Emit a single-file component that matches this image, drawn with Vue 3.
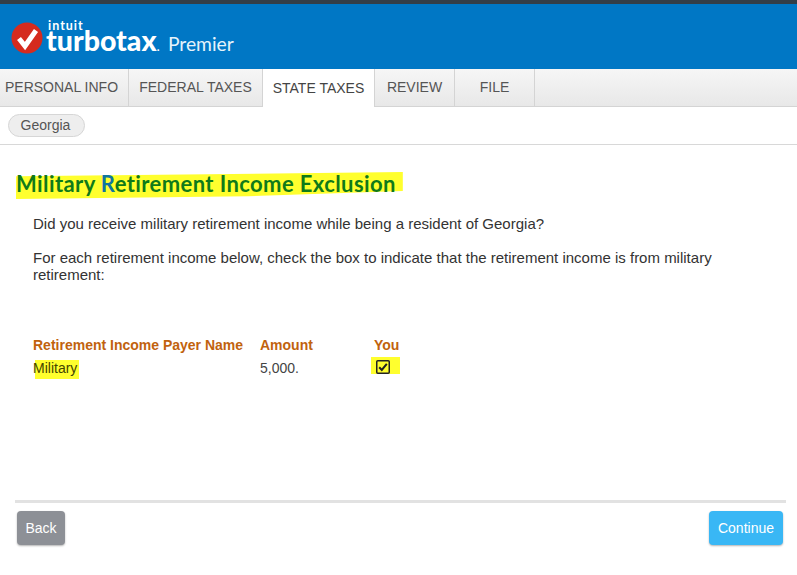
<template>
  <div class="page">
    <header class="brand">
      <svg class="logo" width="32" height="32" viewBox="0 0 32 32">
        <circle cx="16" cy="16" r="15.5" fill="#d52b1e" />
        <path d="M8 16.5l6 7.5L25 8.5" fill="none" stroke="#fff" stroke-width="5" />
      </svg>
      <div class="wordmark">
        <span class="intuit">intuit</span>
        <div class="product">
          <span class="turbotax">turbotax</span><span class="dot">.</span>
          <span class="premier">Premier</span>
        </div>
      </div>
    </header>

    <nav class="tabs">
      <div
        v-for="tab in tabs"
        :key="tab.label"
        class="tab"
        :class="[tab.cls, { active: tab.active }]"
      >
        {{ tab.label }}
      </div>
    </nav>

    <div class="subnav">
      <span class="pill">Georgia</span>
    </div>

    <main class="content">
      <h1 class="title"><span class="marker">Military <span class="blue">R</span>etirement Income Exclusion</span></h1>
      <div class="body">
        <p>Did you receive military retirement income while being a resident of Georgia?</p>
        <p>For each retirement income below, check the box to indicate that the retirement income is from military retirement:</p>

        <div class="table">
          <div class="th">Retirement Income Payer Name</div>
          <div class="th">Amount</div>
          <div class="th">You</div>
          <div><span class="hl-name">Military</span></div>
          <div class="amount">5,000.</div>
          <div class="check-cell">
            <span class="hl-check">
              <svg width="14" height="14" viewBox="0 0 14 14">
                <rect x="0.75" y="0.75" width="12.5" height="12.5" rx="1" fill="none" stroke="#222" stroke-width="1.5" />
                <path d="M3.2 7.2l2.6 2.8 5-6.2" fill="none" stroke="#222" stroke-width="2" />
              </svg>
            </span>
          </div>
        </div>
      </div>
    </main>

    <footer class="footer">
      <button class="btn back">Back</button>
      <button class="btn continue">Continue</button>
    </footer>
  </div>
</template>

<script setup>
const tabs = [
  { label: 'PERSONAL INFO', cls: 't1' },
  { label: 'FEDERAL TAXES', cls: 't2' },
  { label: 'STATE TAXES', cls: 't3', active: true },
  { label: 'REVIEW', cls: 't4' },
  { label: 'FILE', cls: 't5' }
]
</script>

<style>
html, body {
  margin: 0;
  background: #fff;
}
</style>

<style scoped>
.page {
  width: 797px;
  height: 575px;
  overflow: hidden;
  display: flex;
  flex-direction: column;
  font-family: "Liberation Sans", Arial, sans-serif;
  color: #333;
  background: #fff;
}

.brand {
  height: 69px;
  border-top: 4px solid #333e48;
  background: #0077c5;
  display: flex;
  align-items: flex-start;
  padding: 15px 0 0 11px;
  box-sizing: border-box;
  flex: none;
}

.logo {
  flex: none;
  margin-top: 3px;
}

.wordmark {
  margin-left: 3px;
  padding-top: 4px;
  color: #fff;
}

.intuit {
  display: block;
  margin-left: 2px;
  font-family: Lato, sans-serif;
  font-weight: 700;
  font-size: 12.5px;
  line-height: 6px;
  letter-spacing: 1px;
}

.product {
  display: flex;
  align-items: baseline;
  line-height: 20px;
  margin-top: 1px;
}

.turbotax {
  font-family: Lato, sans-serif;
  font-weight: 900;
  font-size: 28.5px;
}

.dot {
  font-family: Lato, sans-serif;
  font-size: 14px;
  margin-right: 8px;
}

.premier {
  font-family: Lato, sans-serif;
  font-size: 19.3px;
  color: #e6f3fb;
}

.tabs {
  height: 38px;
  flex: none;
  display: flex;
  background: linear-gradient(#f6f6f6, #e8e8e8);
  border-bottom: 1px solid #d4d4d4;
  box-sizing: border-box;
}

.tab {
  display: flex;
  align-items: center;
  justify-content: center;
  box-sizing: border-box;
  font-size: 14px;
  color: #555;
  border-right: 1px solid #d4d4d4;
  padding-bottom: 2px;
}

.t1 { width: 129px; padding-right: 5px; }
.t2 { width: 134px; }
.t3 { width: 112px; }
.t4 { width: 80px; }
.t5 { width: 80px; }

.tab.active {
  background: #fff;
  height: 38px;
  color: #444;
  padding-bottom: 0;
}

.subnav {
  height: 38px;
  flex: none;
  box-sizing: border-box;
  border-bottom: 1px solid #d8d8d8;
  padding: 7px 0 0 8px;
}

.pill {
  display: inline-block;
  box-sizing: border-box;
  width: 77px;
  height: 23px;
  padding-right: 2px;
  line-height: 21px;
  text-align: center;
  font-size: 14px;
  color: #555;
  background: #eee;
  border: 1px solid #d6d6d6;
  border-radius: 12px;
}

.content {
  flex: 1;
  padding: 0 11px 0 16px;
}

.title {
  margin: 27px 0 0;
  font-family: Lato, sans-serif;
  font-size: 22px;
  font-weight: 700;
  letter-spacing: 0.4px;
  line-height: 24px;
  color: #0f7a1a;
}

.marker {
  position: relative;
  z-index: 0;
  display: inline-block;
}

.marker::before {
  content: "";
  position: absolute;
  z-index: -1;
  left: 0;
  right: -7px;
  top: 0;
  bottom: -3px;
  background: #ffff2e;
  clip-path: polygon(0 16%, 100% 0, 100% 70%, 60% 90%, 0 100%);
}

.blue {
  color: #0f76a0;
}

.body {
  padding-left: 17px;
  padding-right: 60px;
  font-size: 15px;
  line-height: 17px;
}

.body p {
  margin: 0;
}

.body p:first-child {
  margin-top: 19px;
}

.body p + p {
  margin-top: 17px;
}

.table {
  margin-top: 54px;
  display: grid;
  grid-template-columns: 227px 114px auto;
  justify-content: start;
  row-gap: 6px;
  font-size: 14px;
  line-height: 17px;
}

.th {
  font-weight: 700;
  color: #c1620e;
}

.hl-name {
  display: inline-block;
  height: 19px;
  padding-right: 2px;
  color: #444400;
  background: linear-gradient(#ffff2e, #ffff2e) no-repeat 2px 0;
}

.amount {
  color: #444;
}

.hl-check {
  display: flex;
  box-sizing: border-box;
  width: 29px;
  height: 17px;
  padding-left: 5px;
  align-items: flex-end;
  background: #ffff2e;
  margin-top: -3px;
  margin-left: -3px;
}

.footer {
  flex: none;
  height: 75px;
  margin: 0 11px 0 15px;
  border-top: 3px solid #e2e2e2;
  box-sizing: border-box;
  display: flex;
  justify-content: space-between;
  align-items: flex-start;
  padding: 8px 3px 0 2px;
}

.btn {
  height: 34px;
  border: none;
  border-radius: 4px;
  color: #fff;
  font-family: "Liberation Sans", Arial, sans-serif;
  font-size: 14px;
  box-shadow: 0 1px 2px rgba(0, 0, 0, 0.3);
}

.back {
  width: 48px;
  background: #8d9096;
}

.continue {
  width: 74px;
  background: #39b7f5;
}
</style>
